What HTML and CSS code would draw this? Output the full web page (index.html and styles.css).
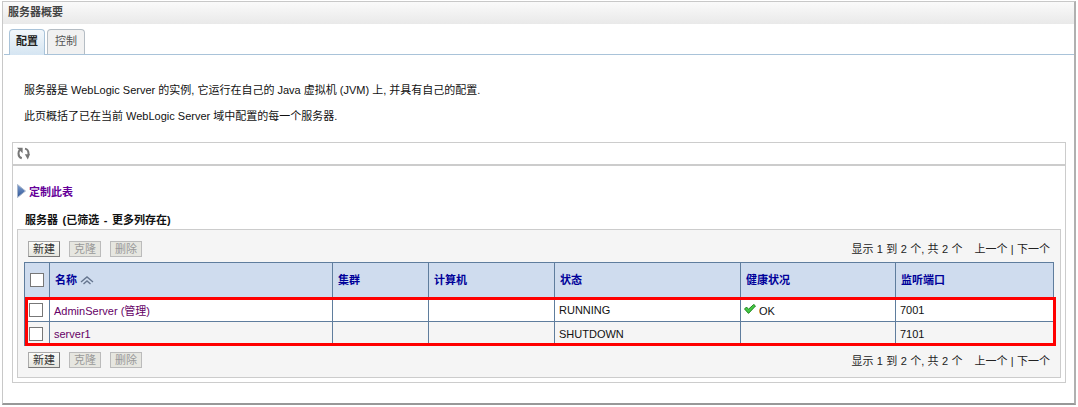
FILE: index.html
```html
<!DOCTYPE html>
<html lang="zh">
<head>
<meta charset="utf-8">
<title>服务器概要</title>
<link rel="stylesheet" href="styles.css">
</head>
<body>
<div class="frame">
  <div class="title">服务器概要</div>
  <div class="tabs">
    <div class="tab active">配置</div>
    <div class="tab">控制</div>
  </div>
  <div class="intro">
    <p>服务器是 WebLogic Server 的实例, 它运行在自己的 Java 虚拟机 (JVM) 上, 并具有自己的配置.</p>
    <p>此页概括了已在当前 WebLogic Server 域中配置的每一个服务器.</p>
  </div>
  <div class="outer">
    <div class="toolbar">
      <svg class="refresh" width="13" height="13" viewBox="0 0 13 13" fill="none" stroke="#777" stroke-width="2">
        <path d="M4.8 11.2C2.4 10.4 1.5 8.4 1.5 6.4c0-1.4.4-2.6 1.3-3.4"/>
        <path d="M8 1.6c2.4.6 3.5 2.6 3.5 4.8V8"/>
        <path d="M0 .8h5.6v5.4z" fill="#777" stroke="none"/>
        <path d="M7.8 7.2H13l-2.2 5.2z" fill="#777" stroke="none"/>
      </svg>
    </div>
    <div class="customize">
      <svg width="9" height="14" viewBox="0 0 9 14">
        <defs>
          <linearGradient id="arrowFill" x1="0" y1="0" x2="0" y2="1">
            <stop offset="0" stop-color="#7f9fd0"/>
            <stop offset="1" stop-color="#2f5596"/>
          </linearGradient>
        </defs>
        <path d="M.5 .5L8.5 7L.5 13.5z" fill="url(#arrowFill)" stroke="#a8b6cc"/>
      </svg>
      <span>定制此表</span>
    </div>
    <div class="caption">服务器 (已筛选 - 更多列存在)</div>
    <div class="panel">
      <div class="controls top">
        <div class="btns">
          <span class="btn">新建</span><span class="btn off">克隆</span><span class="btn off">删除</span>
        </div>
        <div class="pager">显示 1 到 2 个, 共 2 个<span class="gap"></span>上一个 | 下一个</div>
      </div>
      <div class="tablewrap">
        <table>
          <colgroup>
            <col class="c0"><col class="c1"><col class="c2"><col class="c3"><col class="c4"><col class="c5"><col class="c6">
          </colgroup>
          <thead>
            <tr>
              <th class="chk"><span class="box"></span></th>
              <th>名称 <svg class="sort" width="14" height="9" viewBox="0 0 14 9" fill="none" stroke="#66768f" stroke-width="1.4"><path d="M1 6L7 1L13 6"/><path d="M3.5 8L7 5L10.5 8"/></svg></th>
              <th>集群</th>
              <th>计算机</th>
              <th>状态</th>
              <th>健康状况</th>
              <th>监听端口</th>
            </tr>
          </thead>
          <tbody>
            <tr>
              <td class="chk"><span class="box"></span></td>
              <td class="link">AdminServer (管理)</td>
              <td></td>
              <td></td>
              <td>RUNNING</td>
              <td class="health"><svg width="12" height="10" viewBox="0 0 12 10"><path d="M.5 5L2.5 3L4.5 5.2L9.8 0.4L11.5 2L4.5 9.4z" fill="#45c845" stroke="#127a12" stroke-width=".9"/></svg> OK</td>
              <td>7001</td>
            </tr>
            <tr class="alt">
              <td class="chk"><span class="box"></span></td>
              <td class="link">server1</td>
              <td></td>
              <td></td>
              <td>SHUTDOWN</td>
              <td></td>
              <td>7101</td>
            </tr>
          </tbody>
        </table>
        <div class="highlight"></div>
      </div>
      <div class="controls bottom">
        <div class="btns">
          <span class="btn">新建</span><span class="btn off">克隆</span><span class="btn off">删除</span>
        </div>
        <div class="pager">显示 1 到 2 个, 共 2 个<span class="gap"></span>上一个 | 下一个</div>
      </div>
    </div>
  </div>
</div>
</body>
</html>
```
FILE: styles.css
```css
* { box-sizing: border-box; }
html, body { margin: 0; padding: 0; background: #fff; }
body {
  width: 1078px;
  height: 407px;
  overflow: hidden;
  font-family: "Liberation Sans", "Noto Sans CJK SC", sans-serif;
  font-size: 11px;
  color: #111;
}
.frame {
  margin: 1px 2px 0 2px;
  height: 404px;
  border: 1px solid #c8c8c8;
  border-right: 2px solid #b0b0b0;
  border-bottom: 2px solid #989898;
  background: #fff;
  overflow: hidden;
}
.title {
  height: 22px;
  line-height: 21px;
  padding-left: 5px;
  font-weight: bold;
  color: #444;
  background: linear-gradient(#fafafa, #e9e9e9);
}
.tabs {
  display: flex;
  gap: 2px;
  height: 31px;
  padding: 5px 0 0 5px;
  margin-left: 1px;
  border-bottom: 1px solid #a9c3d9;
}
.tab {
  width: 38px;
  height: 25px;
  line-height: 23px;
  text-align: center;
  border: 1px solid #b5bdc4;
  border-bottom: 0;
  border-radius: 4px 4px 0 0;
  background: #f1f1f1;
  color: #555;
}
.tab.active {
  width: 36px;
  height: 26px;
  color: #222;
  font-weight: bold;
  background: linear-gradient(#f2f7fb, #d5e5f2);
  border-color: #a9c3d9;
}
.intro {
  padding: 29px 0 0 21px;
  height: 87px;
}
.intro p { margin: 0 0 13px; line-height: 13px; }
.outer {
  margin: 0 8px 0 9px;
  height: 241px;
  border: 1px solid #ccc;
}
.toolbar {
  height: 23px;
  border-bottom: 2px solid #ccc;
  padding: 4px 0 0 4px;
}
.refresh { display: block; }
.customize {
  display: flex;
  align-items: center;
  gap: 3px;
  margin-top: 18px;
  padding-left: 4px;
  height: 14px;
  font-weight: bold;
  color: #660099;
}
.caption {
  margin-top: 15px;
  padding-left: 12px;
  height: 16px;
  line-height: 15px;
  font-weight: bold;
  color: #111;
  word-spacing: 1.5px;
}
.panel {
  margin: 0 4px;
  height: 149px;
  border: 1px solid #ccc;
  background: #f5f5f5;
  padding: 0 0 0 6px;
}
.controls {
  display: flex;
  justify-content: space-between;
  align-items: center;
  padding: 0 10px 0 4px;
}
.controls.top { height: 32px; padding-top: 5px; }
.controls.bottom { height: 28px; }
.btns { display: flex; gap: 9px; }
.btn {
  width: 32px;
  height: 16px;
  line-height: 14px;
  text-align: center;
  border: 1px solid #aaa;
  border-bottom-color: #777;
  border-right-color: #777;
  background: linear-gradient(#fbfbf8, #e6e6df);
  color: #333;
}
.btn.off {
  color: #999;
  border-color: #bbb;
  background: #e6e6e0;
}
.pager { color: #222; white-space: nowrap; margin-bottom: 1px; word-spacing: .3px; }
.gap { display: inline-block; width: 12px; }
.tablewrap { position: relative; width: 1029px; }
table {
  width: 1029px;
  table-layout: fixed;
  border-collapse: collapse;
  background: #fff;
  border: 1px solid #5f7d9d;
  border-bottom: 0;
}
.c0 { width: 25px; }
.c1 { width: 283px; }
.c2 { width: 96px; }
.c3 { width: 126px; }
.c4 { width: 186px; }
.c5 { width: 155px; }
.c6 { width: 158px; }
th, td {
  border: 1px solid #5f7d9d;
  padding: 0 0 0 4px;
  text-align: left;
  font-weight: normal;
  overflow: hidden;
  white-space: nowrap;
}
th {
  height: 35px;
  background: #cfdcee;
  color: #000099;
  font-weight: bold;
  padding-left: 5px;
  padding-bottom: 3px;
}
td { height: 24px; padding-top: 1px; }
.alt td { background: #f5f5f5; height: 24px; }
th.chk, td.chk { padding: 0 0 0 5px; }
td.chk { padding-left: 4px; }
.box {
  display: block;
  width: 14px;
  height: 14px;
  border: 1px solid #777;
  background: #fff;
}
.link { color: #660066; padding-bottom: 1px; }
.sort { vertical-align: -1px; }
.health { padding-left: 3px; }
.health svg { vertical-align: 1px; }
.highlight {
  position: absolute;
  left: 1px;
  right: -3px;
  top: 35px;
  height: 49px;
  border: 3px solid #f00;
  pointer-events: none;
}
```
